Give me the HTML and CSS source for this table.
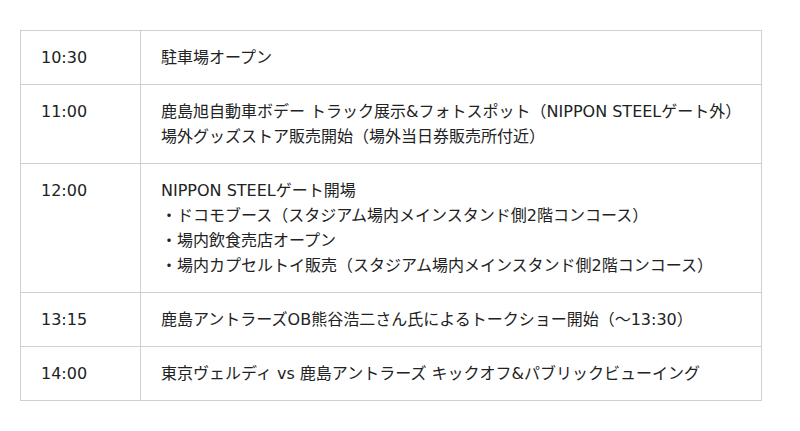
FILE: index.html
```html
<!DOCTYPE html>
<html lang="ja">
<head>
<meta charset="utf-8">
<link rel="stylesheet" href="styles.css">
</head>
<body>
<div class="wrap">
<table class="schedule">
<tr><td class="time">10:30</td><td class="desc">駐車場オープン</td></tr>
<tr><td class="time">11:00</td><td class="desc">鹿島旭自動車ボデー トラック展示&amp;フォトスポット（NIPPON STEELゲート外）<br>場外グッズストア販売開始（場外当日券販売所付近）</td></tr>
<tr><td class="time">12:00</td><td class="desc">NIPPON STEELゲート開場<br>・ドコモブース（スタジアム場内メインスタンド側2階コンコース）<br>・場内飲食売店オープン<br>・場内カプセルトイ販売（スタジアム場内メインスタンド側2階コンコース）</td></tr>
<tr><td class="time">13:15</td><td class="desc">鹿島アントラーズOB熊谷浩二さん氏によるトークショー開始（～13:30）</td></tr>
<tr><td class="time">14:00</td><td class="desc">東京ヴェルディ vs 鹿島アントラーズ キックオフ&amp;パブリックビューイング</td></tr>
</table>
</div>
</body>
</html>
```
FILE: styles.css
```css
html, body {
  margin: 0;
  padding: 0;
  background: #fff;
}
.wrap {
  padding: 30px 38px 0 20px;
}
.schedule {
  width: 742px;
  border-collapse: collapse;
  font-family: "DejaVu Sans", "Noto Sans CJK JP", sans-serif;
  font-size: 16px;
  line-height: 25px;
  color: #222;
}
.schedule td {
  border: 1px solid #d0d0d0;
  padding: 14px 20px;
  vertical-align: top;
  text-align: left;
}
.schedule .time {
  width: 79px;
}
.schedule .desc {
  padding-right: 4px;
  white-space: nowrap;
}
```
